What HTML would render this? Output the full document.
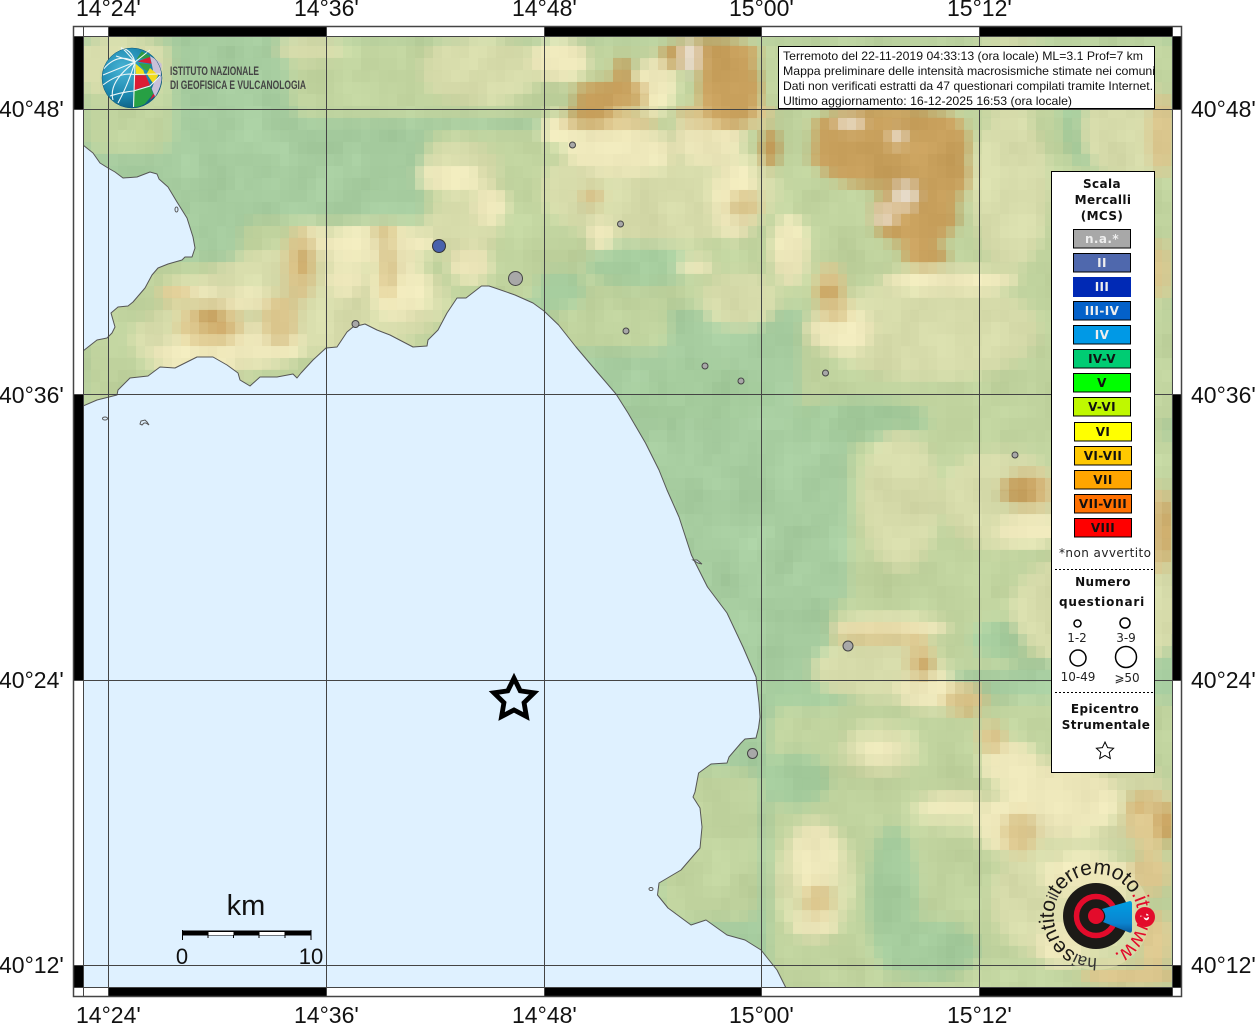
<!DOCTYPE html>
<html><head><meta charset="utf-8"><title>Mappa</title>
<style>
html,body{margin:0;padding:0;background:#fff;width:1255px;height:1024px;overflow:hidden}
svg{position:absolute;left:0;top:0;display:block}
.l{font:23px "Liberation Sans",sans-serif;fill:#111}
.b{font:bold 12px "DejaVu Sans",sans-serif;fill:#111;text-anchor:middle;letter-spacing:.4px}
.r{font:12px "DejaVu Sans",sans-serif;fill:#222;text-anchor:middle}
.t{font:12px "Liberation Sans",sans-serif;fill:#111}
.d{fill:#a8a8a8;stroke:#444;stroke-width:1}
.s{stroke:#000;stroke-width:1}
</style></head><body>
<svg width="1255" height="1024" viewBox="0 0 1255 1024" xmlns="http://www.w3.org/2000/svg">
<defs>
<filter id="px" filterUnits="userSpaceOnUse" x="82" y="34" width="1100" height="960" color-interpolation-filters="sRGB">
<feFlood x="86" y="39" width="1" height="2" flood-color="#000"/>
<feComposite x="82" y="34" width="9" height="12"/>
<feTile result="a"/>
<feComposite in="SourceGraphic" in2="a" operator="in"/>
<feMorphology operator="dilate" radius="4 5"/>
</filter>
<filter id="bl" filterUnits="userSpaceOnUse" x="0" y="0" width="1255" height="1024" color-interpolation-filters="sRGB">
<feGaussianBlur stdDeviation="5" result="s"/>
<feTurbulence type="fractalNoise" baseFrequency=".03 .025" numOctaves="2" seed="7"/>
<feColorMatrix values="1 0 0 0 0 1 0 0 0 0 1 0 0 0 0 0 0 0 0 1" result="n"/>
<feComposite in="s" in2="n" operator="arithmetic" k1="0" k2="1" k3=".1" k4="-.045"/>
</filter>
<clipPath id="fr"><rect x="83" y="36" width="1089" height="952"/></clipPath>
<clipPath id="tb"><rect x="779" y="47" width="376" height="62"/></clipPath>
<radialGradient id="gl" cx="35%" cy="35%" r="75%"><stop offset="0" stop-color="#49b5d6"/><stop offset=".6" stop-color="#1b86ad"/><stop offset="1" stop-color="#0c5578"/></radialGradient>
<linearGradient id="cn" x1="0" y1="0" x2="0" y2="1"><stop offset="0" stop-color="#009ee3"/><stop offset=".7" stop-color="#0a84cf"/><stop offset="1" stop-color="#0a5a9c"/></linearGradient>
<path id="ring" d="M1097 958A42 42 0 1 1 1100 957.800"/>
</defs>
<g clip-path="url(#fr)">
<g filter="url(#px)">
<g filter="url(#bl)">
<rect width="1255" height="1024" fill="#a5cb9e"/>
<g fill="#bfd29d">
<rect x="83" y="37" width="90" height="115" rx="20"/><rect x="290" y="37" width="260" height="80" rx="20"/><rect x="425" y="130" width="125" height="170" rx="20"/>
<rect x="540" y="37" width="640" height="270" rx="20"/><rect x="800" y="300" width="380" height="130" rx="30"/><rect x="850" y="430" width="330" height="230" rx="30"/><rect x="770" y="700" width="420" height="300" rx="30"/>
<rect x="90" y="262" width="430" height="130" rx="20"/><rect x="83" y="340" width="40" height="70"/><rect x="240" y="220" width="240" height="60" rx="20"/><rect x="550" y="300" width="120" height="50" rx="20"/>
<rect x="830" y="600" width="190" height="70" rx="20"/><rect x="660" y="770" width="100" height="150" rx="20"/>
</g>
<g fill="#a3ca9b">
<ellipse cx="893" cy="900" rx="26" ry="75"/><ellipse cx="930" cy="950" rx="50" ry="30"/><ellipse cx="810" cy="695" rx="50" ry="14"/><ellipse cx="795" cy="780" rx="35" ry="28"/><ellipse cx="640" cy="265" rx="55" ry="22"/><ellipse cx="560" cy="290" rx="25" ry="20"/><ellipse cx="700" cy="395" rx="70" ry="30"/><ellipse cx="860" cy="420" rx="70" ry="22"/><ellipse cx="1090" cy="110" rx="30" ry="60"/><ellipse cx="1000" cy="640" rx="30" ry="20"/>
</g>
<g fill="#d5daa9">
<ellipse cx="120" cy="65" rx="50" ry="32"/><ellipse cx="310" cy="48" rx="35" ry="14"/><ellipse cx="480" cy="70" rx="60" ry="35"/><ellipse cx="1010" cy="75" rx="50" ry="40"/><ellipse cx="1130" cy="130" rx="50" ry="50"/>
<ellipse cx="1010" cy="190" rx="40" ry="80"/><ellipse cx="660" cy="190" rx="120" ry="55"/><ellipse cx="930" cy="330" rx="110" ry="50"/><ellipse cx="740" cy="300" rx="40" ry="28"/><ellipse cx="900" cy="500" rx="40" ry="70"/>
<ellipse cx="1100" cy="610" rx="90" ry="60"/><ellipse cx="1090" cy="800" rx="80" ry="50"/><ellipse cx="1000" cy="500" rx="60" ry="50"/><ellipse cx="880" cy="670" rx="70" ry="30"/><ellipse cx="1060" cy="900" rx="70" ry="60"/><ellipse cx="815" cy="880" rx="40" ry="60"/>
<ellipse cx="320" cy="300" rx="130" ry="55"/><ellipse cx="210" cy="340" rx="80" ry="38"/><ellipse cx="460" cy="170" rx="40" ry="30"/><ellipse cx="460" cy="230" rx="40" ry="30"/><ellipse cx="880" cy="750" rx="40" ry="26"/><ellipse cx="960" cy="810" rx="50" ry="20"/>
</g>
<g fill="#ede7ba">
<ellipse cx="620" cy="150" rx="55" ry="25"/><ellipse cx="710" cy="135" rx="35" ry="30"/><ellipse cx="560" cy="60" rx="30" ry="22"/><ellipse cx="655" cy="85" rx="22" ry="28"/><ellipse cx="560" cy="130" rx="20" ry="16"/>
<ellipse cx="735" cy="200" rx="25" ry="40"/><ellipse cx="600" cy="235" rx="14" ry="16"/><ellipse cx="695" cy="265" rx="20" ry="8"/><ellipse cx="840" cy="330" rx="35" ry="22"/><ellipse cx="950" cy="280" rx="70" ry="12"/><ellipse cx="790" cy="250" rx="20" ry="35"/>
<ellipse cx="450" cy="178" rx="35" ry="12"/><ellipse cx="490" cy="205" rx="18" ry="20"/><ellipse cx="470" cy="265" rx="22" ry="18"/>
<ellipse cx="375" cy="245" rx="60" ry="20"/><ellipse cx="400" cy="290" rx="30" ry="30"/><ellipse cx="345" cy="280" rx="20" ry="15"/><ellipse cx="310" cy="240" rx="20" ry="15"/><ellipse cx="200" cy="355" rx="50" ry="18"/><ellipse cx="265" cy="345" rx="40" ry="20"/><ellipse cx="245" cy="300" rx="30" ry="10"/><ellipse cx="190" cy="290" rx="30" ry="9"/>
<ellipse cx="1030" cy="530" rx="35" ry="16"/><ellipse cx="890" cy="628" rx="60" ry="12"/><ellipse cx="930" cy="692" rx="35" ry="18"/><ellipse cx="1010" cy="765" rx="30" ry="24"/>
<ellipse cx="1060" cy="800" rx="60" ry="36"/><ellipse cx="1010" cy="825" rx="35" ry="30"/><ellipse cx="815" cy="860" rx="24" ry="38"/><ellipse cx="815" cy="925" rx="24" ry="14"/><ellipse cx="950" cy="805" rx="30" ry="9"/><ellipse cx="880" cy="752" rx="22" ry="10"/><ellipse cx="1090" cy="875" rx="50" ry="20"/><ellipse cx="1060" cy="945" rx="25" ry="22"/>
</g>
<g fill="#d9c48b">
<ellipse cx="300" cy="265" rx="16" ry="38"/><ellipse cx="210" cy="325" rx="34" ry="22"/><ellipse cx="175" cy="295" rx="18" ry="9"/><ellipse cx="280" cy="320" rx="18" ry="26"/>
<ellipse cx="385" cy="233" rx="12" ry="9"/><ellipse cx="388" cy="270" rx="8" ry="32"/><ellipse cx="1150" cy="820" rx="26" ry="30"/><ellipse cx="1020" cy="833" rx="18" ry="22"/>
<ellipse cx="1130" cy="977" rx="50" ry="12"/><ellipse cx="1150" cy="873" rx="20" ry="22"/><ellipse cx="1155" cy="940" rx="16" ry="30"/><ellipse cx="1030" cy="490" rx="28" ry="20"/><ellipse cx="1160" cy="530" rx="14" ry="45"/><ellipse cx="965" cy="700" rx="22" ry="16"/><ellipse cx="992" cy="738" rx="14" ry="16"/>
<ellipse cx="818" cy="900" rx="16" ry="16"/><ellipse cx="880" cy="636" rx="50" ry="8"/><ellipse cx="920" cy="660" rx="14" ry="20"/><ellipse cx="1162" cy="135" rx="14" ry="40"/>
<ellipse cx="745" cy="205" rx="16" ry="14"/><ellipse cx="592" cy="197" rx="12" ry="10"/><ellipse cx="830" cy="290" rx="16" ry="26"/><ellipse cx="835" cy="310" rx="16" ry="12"/><ellipse cx="1160" cy="270" rx="10" ry="30"/>
<ellipse cx="725" cy="115" rx="50" ry="14"/><ellipse cx="610" cy="120" rx="50" ry="10"/>
</g>
<g fill="#c69e5a">
<ellipse cx="610" cy="95" rx="38" ry="15"/><ellipse cx="622" cy="75" rx="9" ry="18"/><ellipse cx="590" cy="115" rx="22" ry="10"/>
<ellipse cx="710" cy="55" rx="50" ry="18"/><ellipse cx="730" cy="90" rx="32" ry="38"/><ellipse cx="770" cy="148" rx="10" ry="20"/>
<ellipse cx="885" cy="130" rx="74" ry="26"/><ellipse cx="890" cy="165" rx="70" ry="24"/><ellipse cx="940" cy="145" rx="30" ry="34"/><ellipse cx="915" cy="215" rx="44" ry="32"/><ellipse cx="950" cy="175" rx="20" ry="26"/><ellipse cx="925" cy="255" rx="24" ry="12"/><ellipse cx="825" cy="155" rx="16" ry="14"/>
<ellipse cx="210" cy="320" rx="14" ry="9"/><ellipse cx="222" cy="328" rx="10" ry="5"/><ellipse cx="303" cy="263" rx="6" ry="12"/>
<ellipse cx="1022" cy="490" rx="22" ry="12"/><ellipse cx="1165" cy="825" rx="9" ry="20"/><ellipse cx="1138" cy="803" rx="10" ry="6"/><ellipse cx="1165" cy="530" rx="6" ry="30"/>
<ellipse cx="828" cy="292" rx="12" ry="8"/><ellipse cx="968" cy="708" rx="5" ry="5"/><ellipse cx="925" cy="665" rx="6" ry="10"/>
</g>
<g fill="#e7dccb">
<ellipse cx="690" cy="57" rx="11" ry="16"/><ellipse cx="898" cy="137" rx="9" ry="7"/><ellipse cx="905" cy="195" rx="14" ry="13"/><ellipse cx="885" cy="215" rx="13" ry="8"/><ellipse cx="850" cy="122" rx="16" ry="6"/>
</g>
</g>
</g>
<path fill="#dff1ff" stroke="#555" stroke-width="1" stroke-linejoin="round" d="M83 145L93 153 100 163 108 168 115 172 123 178 137 177 150 172 157 174 159 179 168 187 177 202 187 218 193 237 195 248 192 257 185 257 182 260 168 264 158 268 152 275 145 288 133 302 128 306 118 307 111 313 115 327 112 333 107 338 97 340 83 351Z"/>
<path fill="#dff1ff" stroke="#555" stroke-width="1" stroke-linejoin="round" d="M83 406L97 400 117 395 118 390 130 378 148 376 160 367 175 368 197 357 213 357 227 365 238 373 240 380 250 386 260 377 277 377 293 374 297 378 301 373 313 360 326 348 337 347 347 332 353 327 365 324 377 330 390 335 413 347 427 346 428 340 438 330 447 313 457 298 466 298 481.5 286 489 286 495 288 515 295 533 303 544 311 558.6 325 576 347 598 373 616 394 628 413 645.5 443 659 470 667 490 679 517 691.4 555 707.5 587 727 613 743 647 756 677 759 703 760 717 758.5 728 756 738 745 739 741 743 729 757 727 763 711 764 698.6 773 695 792 693 797 700 808 702 827 700 848 681 870 659 883 657.5 895 668 908 691 925 706 920 727 935 745 940 761 950 777 970 786 988 83 988Z"/>
<g fill="#dff1ff" stroke="#555" stroke-width="1"><ellipse cx="176.500" cy="209.500" rx="1.500" ry="2.500"/><ellipse cx="105" cy="418.500" rx="2.500" ry="1.500"/><path d="M140 424l1-3 4-1 2 2 2 3-3-2-2 0-2 2z"/><ellipse cx="651" cy="889" rx="2" ry="1.500"/><path d="M693 560l4 0 5 4-4-1z"/></g>
</g>
<rect x="83.500" y="26.500" width="1089" height="10" fill="#fff"/>
<g fill="#000"><rect x="108" y="26" width="218" height="10"/><rect x="544" y="26" width="217" height="10"/><rect x="979" y="26" width="193" height="10"/><rect x="108" y="988" width="218" height="9"/><rect x="544" y="988" width="217" height="9"/><rect x="979" y="988" width="193" height="9"/>
<rect x="73" y="36" width="10" height="73"/><rect x="73" y="394" width="10" height="286"/><rect x="73" y="965" width="10" height="23"/><rect x="1172" y="36" width="10" height="73"/><rect x="1172" y="394" width="10" height="286"/><rect x="1172" y="965" width="10" height="23"/></g>
<g fill="none" stroke="#444" stroke-width="1">
<path d="M108.500 26V997M326.500 26V997M544.500 26V997M761.500 26V997M979.500 26V997M73 109.500H1182M73 394.500H1182M73 680.500H1182M73 965.500H1182M83.500 26V997M1172.500 26V997M73 36.500H1182M73 987.500H1182"/>
<rect x="73.500" y="26.500" width="1108" height="970" stroke="#444" stroke-width="1.500"/>
</g>
<g class="l">
<text class="l" x="76" y="16">14°24'</text><text class="l" x="294" y="16">14°36'</text><text class="l" x="512" y="16">14°48'</text><text class="l" x="729" y="16">15°00'</text><text class="l" x="947" y="16">15°12'</text>
<text class="l" x="76" y="1023">14°24'</text><text class="l" x="294" y="1023">14°36'</text><text class="l" x="512" y="1023">14°48'</text><text class="l" x="729" y="1023">15°00'</text><text class="l" x="947" y="1023">15°12'</text>
<text class="l" x="-1" y="117">40°48'</text><text class="l" x="-1" y="403">40°36'</text><text class="l" x="-1" y="688">40°24'</text><text class="l" x="-1" y="973">40°12'</text>
<text class="l" x="1191" y="117">40°48'</text><text class="l" x="1191" y="403">40°36'</text><text class="l" x="1191" y="688">40°24'</text><text class="l" x="1191" y="973">40°12'</text>
</g>
<circle class="d" cx="515.500" cy="278.500" r="7"/>
<circle cx="439" cy="246" r="6.500" fill="#4a62ac" stroke="#333" stroke-width="1"/>
<circle class="d" cx="572.500" cy="145" r="3"/><circle class="d" cx="620.500" cy="224" r="3"/><circle class="d" cx="626" cy="331" r="3"/><circle class="d" cx="705" cy="366" r="3"/><circle class="d" cx="741" cy="381" r="3"/><circle class="d" cx="825.500" cy="373" r="3"/><circle class="d" cx="1015" cy="455" r="3"/><circle class="d" cx="355.500" cy="324" r="3.500"/><circle class="d" cx="848" cy="646" r="5"/><circle class="d" cx="752.500" cy="753.500" r="5"/>
<path transform="translate(514 698) scale(1.07) translate(-514 -698)" d="M514 679.500L519.800 691.300 532.800 693.200 523.400 702.400 525.600 715.300 514 709.200 502.400 715.300 504.600 702.400 495.200 693.200 508.200 691.300Z" fill="none" stroke="#000" stroke-width="4.500" stroke-linejoin="miter"/>
<g>
<circle cx="132" cy="78" r="30" fill="url(#gl)"/>
<path d="M136.700 59L141.700 51.300 150 56 149 58Z" fill="#2e9a45"/>
<path d="M137.700 61.300L150 57 151.700 63.700 140 62Z" fill="#d71f36"/>
<path d="M150 56Q159 61 161.700 64L161 76 153.300 72 151.700 63.700Z" fill="#c9c0d8"/>
<path d="M138.300 62.700L151 64.700 148.300 71.300 143.300 68.700Z" fill="#34a045"/>
<path d="M135.700 63.700L143.300 70.300 145 75.300 135.700 74.300Z" fill="#f2e01c"/>
<path d="M150 68L158.300 75.300 153.300 83.700 146.700 73.700Z" fill="#f2d91c"/>
<path d="M134.300 75.300L145.700 75.300 150 85.300 134.300 90Z" fill="#dc1c34"/>
<path d="M154.300 82L161.700 75.300Q162 86 155 97L151.700 88.700Z" fill="#c9c0d8"/>
<path d="M133.300 91.300L150 86.300 153.300 93.700 145 103.700Q140 107 133.300 107Z" fill="#27a044"/>
<path d="M153.300 93.700L155 96 150 100Z" fill="#d71f36"/>
<g fill="none" stroke="#eef7f7" stroke-width="1.100">
<path d="M135 62L133.500 107"/><path d="M103.500 69Q118 52 135 62"/><path d="M103 75L135 62"/><path d="M135 62Q118 42 122 50"/><path d="M135 62Q108 82 113 100"/><path d="M135 62Q128 85 118 103"/>
<path d="M103 85Q120 72 134 74.500L160 74"/><path d="M110 96Q122 92 133.500 91L150 86 160 76"/><path d="M116 56Q128 60 135 62"/><path d="M135 62L150 50"/><path d="M125 49Q132 52 135 62"/>
</g>
<circle cx="132" cy="78" r="30" fill="none" stroke="#0c5578" stroke-width=".5"/>
<text x="170" y="75" textLength="89" lengthAdjust="spacingAndGlyphs" style="font:bold 12px 'Liberation Sans',sans-serif" fill="#444">ISTITUTO NAZIONALE</text>
<text x="170" y="89" textLength="136" lengthAdjust="spacingAndGlyphs" style="font:bold 12px 'Liberation Sans',sans-serif" fill="#444">DI GEOFISICA E VULCANOLOGIA</text>
</g>
<rect x="778.500" y="46.500" width="376" height="62" fill="#fff" stroke="#000" stroke-width="1"/>
<g clip-path="url(#tb)">
<text class="t" x="783" y="60" textLength="360" lengthAdjust="spacingAndGlyphs">Terremoto del 22-11-2019 04:33:13 (ora locale) ML=3.1 Prof=7 km</text>
<text class="t" x="783" y="75" textLength="372" lengthAdjust="spacingAndGlyphs">Mappa preliminare delle intensità macrosismiche stimate nei comuni</text>
<text class="t" x="783" y="90" textLength="370" lengthAdjust="spacingAndGlyphs">Dati non verificati estratti da 47 questionari compilati tramite Internet.</text>
<text class="t" x="783" y="105" textLength="289" lengthAdjust="spacingAndGlyphs">Ultimo aggiornamento: 16-12-2025 16:53 (ora locale)</text>
</g>
<rect x="1051.500" y="171.500" width="103" height="601" fill="#fff" stroke="#000" stroke-width="1"/>
<text class="b" x="1102" y="188">Scala</text><text class="b" x="1103" y="204">Mercalli</text><text class="b" x="1102" y="220">(MCS)</text>
<g class="s">
<rect x="1073.500" y="229.500" width="57" height="18.500" fill="#a8a8a8"/><rect x="1073.500" y="253.500" width="57" height="18.500" fill="#4f68ad"/><rect x="1073" y="277" width="58" height="20" fill="#0029b5" stroke="none"/><rect x="1073.500" y="301.500" width="57" height="18.500" fill="#0461c9"/><rect x="1073.500" y="325.500" width="57" height="18.500" fill="#0099e6"/><rect x="1073.500" y="349.500" width="57" height="18.500" fill="#00cc73"/><rect x="1073.500" y="373.500" width="57" height="18.500" fill="#00ff00"/><rect x="1073.500" y="397.500" width="57" height="18.500" fill="#bff800"/>
<rect x="1074.500" y="422.500" width="57" height="18.500" fill="#ffff00"/><rect x="1074.500" y="446.500" width="57" height="18.500" fill="#ffc800"/><rect x="1074.500" y="470.500" width="57" height="18.500" fill="#ffa500"/><rect x="1074.500" y="494.500" width="57" height="18.500" fill="#ff7000"/><rect x="1074.500" y="518.500" width="57" height="18.500" fill="#ff0000"/>
</g>
<g class="b"><text class="b" x="1102" y="243" style="fill:#eee">n.a.*</text><text class="b" x="1102" y="267" style="fill:#eee">II</text><text class="b" x="1102" y="291" style="fill:#eee">III</text><text class="b" x="1102" y="315" style="fill:#eee">III-IV</text><text class="b" x="1102" y="339" style="fill:#eee">IV</text><text class="b" x="1102" y="363">IV-V</text><text class="b" x="1102" y="387">V</text><text class="b" x="1102" y="411">V-VI</text><text class="b" x="1103" y="436">VI</text><text class="b" x="1103" y="460">VI-VII</text><text class="b" x="1103" y="484">VII</text><text class="b" x="1103" y="508">VII-VIII</text><text class="b" x="1103" y="532">VIII</text></g>
<text class="r" x="1105" y="557" textLength="92">*non avvertito</text>
<path d="M1055 569.500H1153M1055 692.500H1153" stroke="#000" stroke-width="1" stroke-dasharray="2 2"/>
<text class="b" x="1103" y="586">Numero</text><text class="b" x="1102" y="606" style="letter-spacing:.8px">questionari</text>
<g fill="none" stroke="#000" stroke-width="1.500"><circle cx="1077.500" cy="623.500" r="3.500"/><circle cx="1125" cy="623" r="5"/><circle cx="1078" cy="658" r="8"/><circle cx="1126" cy="657" r="10.500"/></g>
<text class="r" x="1077" y="642">1-2</text><text class="r" x="1126" y="642">3-9</text><text class="r" x="1078" y="681">10-49</text><text class="r" x="1127" y="682">⩾50</text>
<text class="b" x="1105" y="713">Epicentro</text><text class="b" x="1106" y="729">Strumentale</text>
<path d="M1105 742L1107.600 747.600 1113.600 748.300 1109.200 752.400 1110.300 758.500 1105 755.500 1099.700 758.500 1100.800 752.400 1096.400 748.300 1102.400 747.600Z" fill="#fff" stroke="#000" stroke-width="1"/>
<g>
<text x="246" y="915" text-anchor="middle" style="font:29px 'Liberation Sans',sans-serif" fill="#111">km</text>
<rect x="182" y="930.500" width="129" height="5" fill="#000"/>
<rect x="208.500" y="932" width="25" height="3" fill="#fff"/><rect x="259.500" y="932" width="25" height="3" fill="#fff"/>
<path d="M182.500 930V940M311 930V940M208 935V938M233.500 935V938M259 935V938M285 935V938" stroke="#000" stroke-width="1"/>
<text x="182" y="964" text-anchor="middle" style="font:22px 'Liberation Sans',sans-serif" fill="#111">0</text>
<text x="311" y="964" text-anchor="middle" style="font:22px 'Liberation Sans',sans-serif" fill="#111">10</text>
</g>
<g>
<circle cx="1096" cy="916" r="54" fill="#ece4b6" opacity=".45"/>
<circle cx="1096" cy="916" r="33" fill="#1c1a17"/>
<circle cx="1096" cy="916" r="19.500" fill="none" stroke="#e30b2b" stroke-width="5.500"/>
<circle cx="1096" cy="916" r="8" fill="#e30b2b"/>
<path d="M1102 909L1130 901Q1132 901 1132 904L1132 930Q1132 934 1128 932L1103 922Q1108 916 1102 909Z" fill="url(#cn)"/>
<circle cx="1145" cy="917" r="10" fill="#e30b2b"/>
<text x="1145" y="922" text-anchor="middle" transform="rotate(90 1145 917)" style="font:bold 13px 'Liberation Sans',sans-serif" fill="#fff">?</text>
<text style="font:21px 'Liberation Sans',sans-serif;letter-spacing:-.3px" fill="#1c1a17"><textPath href="#ring"><tspan font-size="17" fill="#333">hai</tspan>sentito<tspan font-size="16" fill="#333">il</tspan>terremoto<tspan fill="#e30b2b">.it www.</tspan></textPath></text>
</g>
</svg>
</body></html>
